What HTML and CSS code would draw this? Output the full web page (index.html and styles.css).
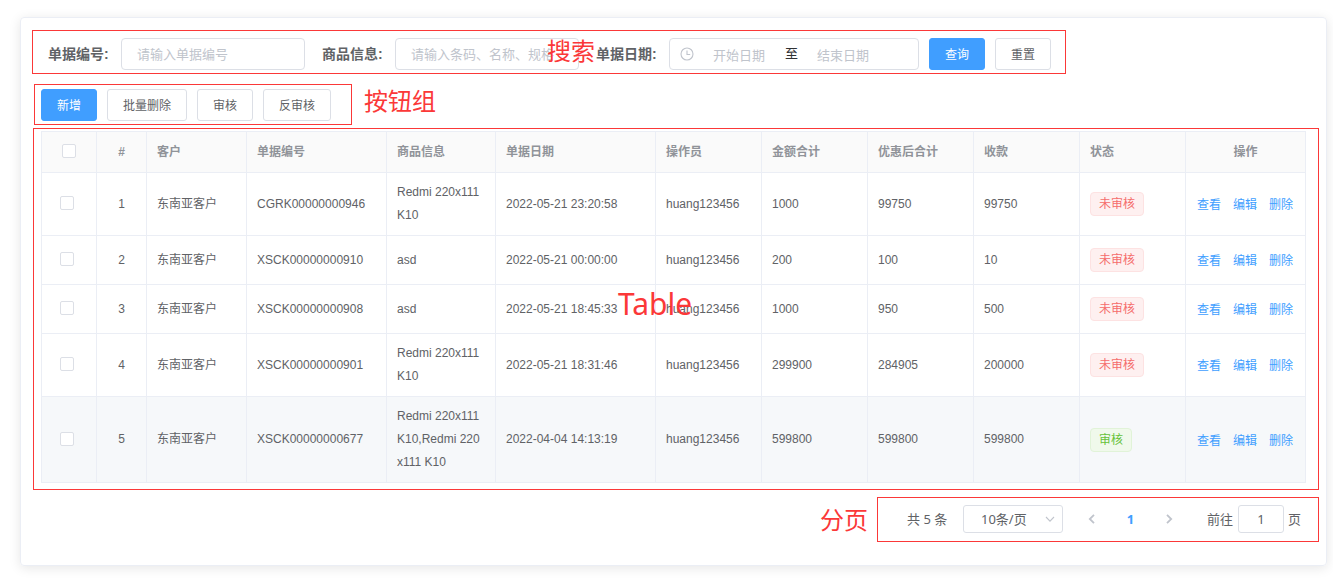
FILE: index.html
```html
<!DOCTYPE html>
<html lang="zh-CN">
<head>
<meta charset="utf-8">
<title>单据列表</title>
<link rel="stylesheet" href="styles.css">
</head>
<body>
<main class="card">
  <form class="search">
    <label class="label">单据编号:</label>
    <div class="input">请输入单据编号</div>
    <label class="label label-next">商品信息:</label>
    <div class="input">请输入条码、名称、规格</div>
    <label class="label label-next">单据日期:</label>
    <div class="input range">
      <svg class="clock" viewBox="0 0 14 14"><circle cx="7" cy="7" r="6"/><path d="M7 3.5V7.5H10.2"/></svg>
      <span class="range-text">开始日期</span>
      <span class="range-sep">至</span>
      <span class="range-text">结束日期</span>
    </div>
    <span class="btn primary">查询</span>
    <span class="btn">重置</span>
  </form>

  <div class="toolbar">
    <span class="btn primary">新增</span>
    <span class="btn">批量删除</span>
    <span class="btn">审核</span>
    <span class="btn">反审核</span>
  </div>

  <table class="table">
    <colgroup>
      <col class="w55"><col class="w50"><col class="w100"><col class="w140"><col class="w109"><col class="w160">
      <col class="w106"><col class="w106"><col class="w106"><col class="w106"><col class="w106"><col class="w120">
    </colgroup>
    <thead>
      <tr class="head"><th class="center"><i class="check"></i></th><th class="center">#</th><th>客户</th><th>单据编号</th><th>商品信息</th><th>单据日期</th><th>操作员</th><th>金额合计</th><th>优惠后合计</th><th>收款</th><th>状态</th><th class="center">操作</th></tr>
    </thead>
    <tbody>
      <tr class="two"><td class="pick"><i class="check"></i></td><td class="center">1</td><td>东南亚客户</td><td>CGRK00000000946</td><td>Redmi 220x111 K10</td><td>2022-05-21 23:20:58</td><td>huang123456</td><td>1000</td><td>99750</td><td>99750</td><td><span class="tag danger">未审核</span></td><td><div class="links"><a>查看</a><a>编辑</a><a>删除</a></div></td></tr>
      <tr class="one"><td class="pick"><i class="check"></i></td><td class="center">2</td><td>东南亚客户</td><td>XSCK00000000910</td><td>asd</td><td>2022-05-21 00:00:00</td><td>huang123456</td><td>200</td><td>100</td><td>10</td><td><span class="tag danger">未审核</span></td><td><div class="links"><a>查看</a><a>编辑</a><a>删除</a></div></td></tr>
      <tr class="one"><td class="pick"><i class="check"></i></td><td class="center">3</td><td>东南亚客户</td><td>XSCK00000000908</td><td>asd</td><td>2022-05-21 18:45:33</td><td>huang123456</td><td>1000</td><td>950</td><td>500</td><td><span class="tag danger">未审核</span></td><td><div class="links"><a>查看</a><a>编辑</a><a>删除</a></div></td></tr>
      <tr class="two"><td class="pick"><i class="check"></i></td><td class="center">4</td><td>东南亚客户</td><td>XSCK00000000901</td><td>Redmi 220x111 K10</td><td>2022-05-21 18:31:46</td><td>huang123456</td><td>299900</td><td>284905</td><td>200000</td><td><span class="tag danger">未审核</span></td><td><div class="links"><a>查看</a><a>编辑</a><a>删除</a></div></td></tr>
      <tr class="three hover"><td class="pick"><i class="check"></i></td><td class="center">5</td><td>东南亚客户</td><td>XSCK00000000677</td><td>Redmi 220x111 K10,Redmi 220<wbr>x111 K10</td><td>2022-04-04 14:13:19</td><td>huang123456</td><td>599800</td><td>599800</td><td>599800</td><td><span class="tag success">审核</span></td><td><div class="links"><a>查看</a><a>编辑</a><a>删除</a></div></td></tr>
    </tbody>
  </table>

  <nav class="pager">
    <span class="total">共 5 条</span>
    <span class="size">10条/页<svg class="caret" viewBox="0 0 10 10"><path d="M1 3L5 7.2L9 3"/></svg></span>
    <svg class="arrow" viewBox="0 0 10 10"><path d="M7 0.8L2.8 5L7 9.2"/></svg>
    <span class="current">1</span>
    <svg class="arrow" viewBox="0 0 10 10"><path d="M3 0.8L7.2 5L3 9.2"/></svg>
    <span class="jump">前往</span>
    <span class="jump-input">1</span>
    <span>页</span>
  </nav>
</main>

<div class="frame frame-search"></div>
<div class="frame frame-buttons"></div>
<div class="frame frame-table"></div>
<div class="frame frame-pager"></div>
<div class="note note-search">搜索</div>
<div class="note note-buttons">按钮组</div>
<div class="note note-table">Table</div>
<div class="note note-pager">分页</div>
</body>
</html>
```

FILE: styles.css
```css
* { box-sizing: border-box; }
body {
  margin: 0;
  padding: 17px 6px 14px 20px;
  height: 580px;
  overflow: hidden;
  background: #fff;
  color: #606266;
  font: 12px/23px "Liberation Sans", "Noto Sans CJK SC", sans-serif;
}
.card {
  height: 549px;
  padding: 20px 20px 0;
  border: 1px solid #ebeef5;
  border-radius: 4px;
  box-shadow: 0 2px 12px rgba(0, 0, 0, .1);
}

/* search form */
.search { display: flex; height: 32px; }
.label { width: 73px; margin-left: 7px; font-size: 14px; line-height: 32px; font-weight: 700; white-space: nowrap; }
.label-next { margin-left: 17px; }
.input {
  width: 184px;
  height: 32px;
  padding-left: 15px;
  border: 1px solid #dcdfe6;
  border-radius: 4px;
  font-size: 13px;
  line-height: 31px;
  color: #c0c4cc;
  white-space: nowrap;
}
.range { display: flex; width: 250px; padding-left: 10px; margin-right: 10px; }
.clock { width: 14px; height: 14px; margin-top: 8px; fill: none; stroke: #c0c4cc; stroke-width: 1.1; }
.range-text { width: 90px; text-align: center; line-height: 33px; }
.range-sep { width: 14px; padding-left: 1px; color: #303133; line-height: 29px; }
.btn {
  height: 32px;
  padding: 0 15px;
  border: 1px solid #dcdfe6;
  border-radius: 3px;
  line-height: 32px;
  white-space: nowrap;
}
.btn + .btn { margin-left: 10px; }
.primary { background: #409eff; border-color: #409eff; color: #fff; }
.toolbar { display: flex; margin-top: 19px; }

/* table */
.table {
  width: 1265px;
  margin-top: 10px;
  border-collapse: separate;
  border-spacing: 0;
  table-layout: fixed;
  border-top: 1px solid #ebeef5;
  border-left: 1px solid #ebeef5;
}
.w55 { width: 55px; }
.w50 { width: 50px; }
.w100 { width: 100px; }
.w140 { width: 140px; }
.w109 { width: 109px; }
.w160 { width: 160px; }
.w106 { width: 106px; }
.w120 { width: 120px; }
th, td {
  padding: 0 10px;
  border-right: 1px solid #ebeef5;
  border-bottom: 1px solid #ebeef5;
  text-align: left;
  vertical-align: middle;
}
th { background: #fafafa; color: #909399; font-weight: 700; }
.head { height: 41px; }
.one { height: 49px; }
.two { height: 63px; }
.three { height: 86px; }
.hover { background: #f6f8fa; }
.table .center { text-align: center; }
.table .pick { padding-left: 18px; }
.check {
  display: block;
  width: 14px;
  height: 14px;
  margin: 0 0 2px;
  border: 1px solid #dcdfe6;
  border-radius: 2px;
  background: #fff;
}
th .check { margin: 0 auto 2px; }
.tag {
  display: block;
  width: max-content;
  height: 24px;
  padding: 0 8px;
  border: 1px solid;
  border-radius: 4px;
  line-height: 22px;
}
.danger { background: #fef0f0; border-color: #fde2e2; color: #f56c6c; }
.success { background: #f0f9eb; border-color: #e1f3d8; color: #67c23a; }
.links { display: flex; gap: 12px; padding: 3px 0 0 1px; color: #409eff; white-space: nowrap; }

/* pagination */
.pager {
  display: flex;
  align-items: center;
  height: 28px;
  margin-top: 22px;
  padding-left: 866px;
  font: 13px/28px "Noto Sans", "Noto Sans CJK SC", sans-serif;
  white-space: nowrap;
}
.total { width: 56px; line-height: 27px; }
.size {
  display: flex;
  align-items: center;
  justify-content: space-between;
  width: 100px;
  height: 28px;
  padding: 0 7px 0 17px;
  margin-right: 24px;
  border: 1px solid #dcdfe6;
  border-radius: 3px;
}
.caret, .arrow { width: 10px; height: 10px; fill: none; stroke: #c0c4cc; stroke-width: 1.1; }
.arrow { stroke-width: 1.8; }
.current { width: 67px; text-align: center; color: #409eff; font-weight: 700; line-height: 26px; }
.jump { width: 31px; margin-left: 33px; }
.jump-input {
  width: 46px;
  height: 28px;
  margin-right: 4px;
  border: 1px solid #dcdfe6;
  border-radius: 3px;
  line-height: 26px;
  text-align: center;
}

/* annotations laid over the page */
.frame { position: absolute; border: 1px solid #fb3838; }
.frame-search { left: 32px; top: 30px; width: 1034px; height: 44px; }
.frame-buttons { left: 34px; top: 84px; width: 318px; height: 41px; }
.frame-table { left: 33px; top: 128px; width: 1286px; height: 362px; }
.frame-pager { left: 877px; top: 497px; width: 442px; height: 45px; }
.note { position: absolute; color: #fb3838; font: 24px/32px "Noto Sans CJK SC", sans-serif; white-space: nowrap; }
.note-search { left: 547px; top: 34px; }
.note-buttons { left: 364px; top: 84px; }
.note-table { left: 618px; top: 288px; font: 30px/32px "Noto Sans", sans-serif; }
.note-pager { left: 820px; top: 503px; }
```
